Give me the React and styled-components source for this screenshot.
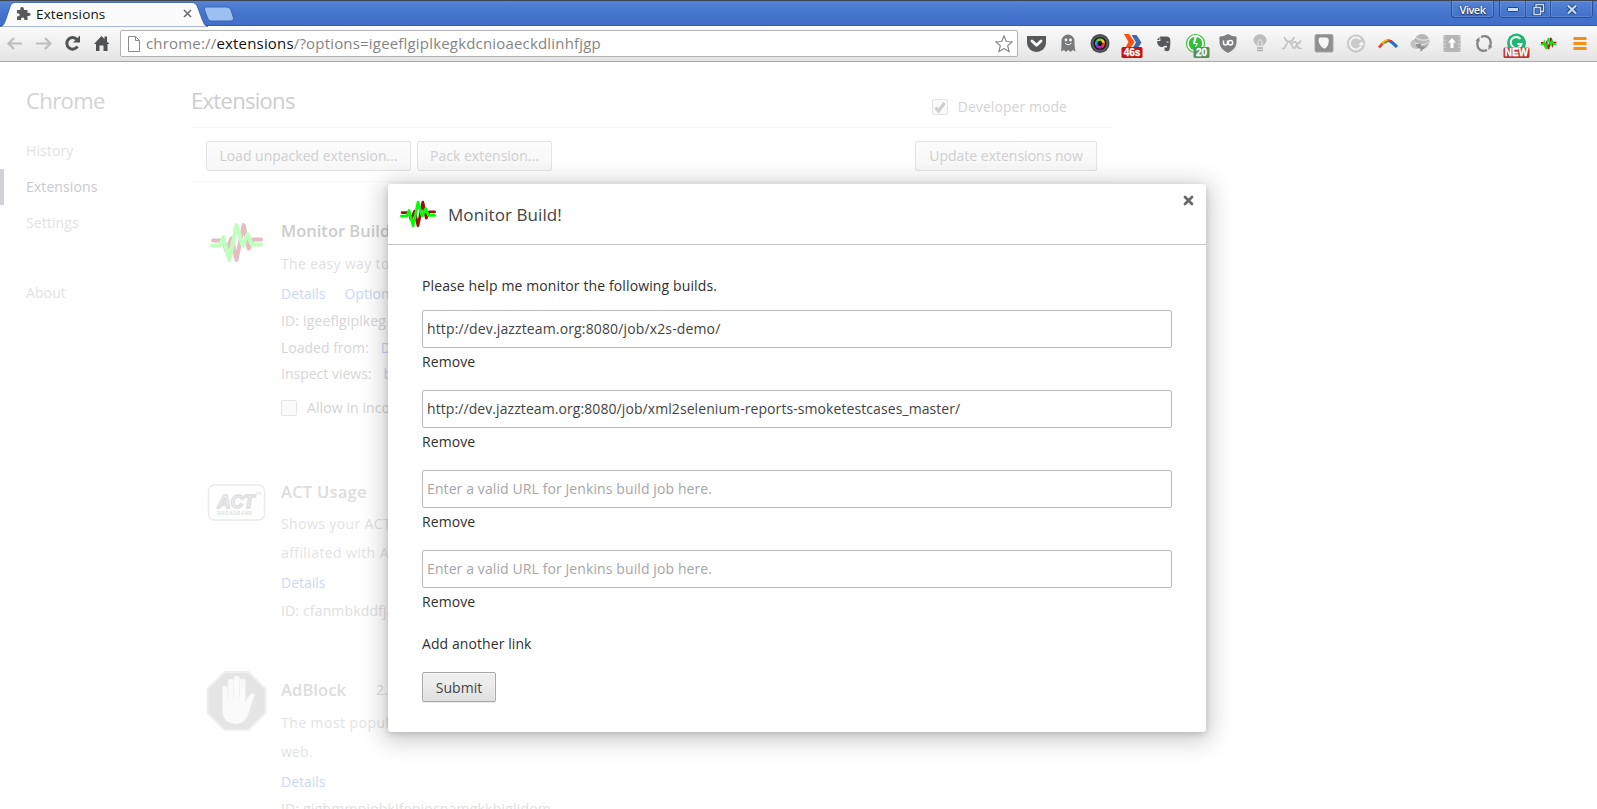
import React from "react";
import styled, { createGlobalStyle } from "styled-components";

const GlobalStyle = createGlobalStyle`
  * { box-sizing: border-box; }
  html, body { margin: 0; padding: 0; }
  body {
    width: 1597px;
    height: 809px;
    overflow: hidden;
    background: #fff;
    font-family: "Open Sans", "Noto Sans", sans-serif;
    font-size: 14px;
    line-height: 20px;
  }
`;

const Window = styled.div`
  position: relative;
  width: 1597px;
  height: 809px;
  overflow: hidden;
  display: flex;
  flex-direction: column;
`;

/* ---------- Browser frame ---------- */

const TitleBar = styled.header`
  height: 26px;
  display: flex;
  flex: none;
  align-items: flex-start;
  border-top: 1px solid #3c4450;
  border-bottom: 1px solid #34599f;
  background: linear-gradient(#5384d6, #4372cb 60%, #416fc9);
`;

const Tab = styled.div`
  position: relative;
  width: 206px;
  height: 25px;
  padding: 0 14px 0 16px;
  display: flex;
  align-items: center;
`;

const TabShape = styled.svg`
  position: absolute;
  left: 0;
  top: 0;
`;

const TabTitle = styled.span`
  position: relative;
  flex: 1;
  margin-left: 5px;
  font-size: 13.5px;
  line-height: 24px;
  letter-spacing: 0.15px;
  color: #111;
`;

const TabIcon = styled.svg`
  position: relative;
  flex: none;
`;

const NewTab = styled.svg`
  flex: none;
  margin: 5px 0 0 -3px;
`;

const Spacer = styled.div`
  flex: 1;
`;

const ProfileButton = styled.div`
  width: 43px;
  height: 17px;
  margin-right: 5px;
  border: 1px solid #2c4e94;
  border-top: 0;
  border-radius: 0 0 4px 4px;
  box-shadow: inset 0 0 0 1px rgba(255, 255, 255, 0.15);
  color: #fff;
  font-size: 11px;
  font-weight: 600;
  line-height: 18px;
  letter-spacing: -0.5px;
  text-align: center;
  text-shadow: 0 0 2px #1c2d50, 0 1px 1px #1c2d50;
`;

const WindowControls = styled.div`
  display: flex;
  height: 17px;
  margin-right: 4px;
  border: 1px solid #2c4e94;
  border-top: 0;
  border-radius: 0 0 4px 4px;
`;

const WindowControl = styled.div`
  width: ${(p) => p.$width}px;
  display: flex;
  align-items: center;
  justify-content: center;
  box-shadow: inset 0 0 0 1px rgba(255, 255, 255, 0.12);
  & + & { border-left: 1px solid #2c4e94; }
`;

const Toolbar = styled.nav`
  height: 36px;
  flex: none;
  display: flex;
  align-items: center;
  border-bottom: 1px solid #a9a9a9;
  background: linear-gradient(#fbfbfb, #e4e4e4);
`;

const NavButtons = styled.svg`
  flex: none;
`;

const Omnibox = styled.div`
  width: 898px;
  height: 27px;
  padding: 0 4px 0 7px;
  display: flex;
  align-items: center;
  border: 1px solid #b1b1b1;
  border-radius: 2px;
  background: #fff;
`;

const Url = styled.span`
  flex: 1;
  margin-left: 6px;
  font-size: 15px;
  line-height: 25px;
  letter-spacing: 0.18px;
  color: #858585;
  b { font-weight: 400; color: #111; }
`;

const ExtensionStrip = styled.div`
  display: flex;
  margin-left: 2px;
`;

const ExtIcon = styled.svg.attrs({ width: 32, height: 32, viewBox: "0 0 32 32" })`
  flex: none;
  overflow: visible;
`;

/* ---------- Settings page ---------- */

const Page = styled.main`
  flex: 1;
  display: flex;
  min-height: 0;
  background: #fff;
`;

const Sidebar = styled.aside`
  width: 191px;
  flex: none;
`;

const SideTitle = styled.h1`
  margin: 20px 0 15px 26px;
  font-size: 22px;
  font-weight: 400;
  line-height: 36px;
  letter-spacing: -0.6px;
  color: #d2d3d5;
`;

const SideItem = styled.div`
  height: 36px;
  padding-left: 22px;
  margin-top: ${(p) => p.$gap || 0}px;
  border-left: 4px solid ${(p) => (p.$active ? "#d2d3d8" : "transparent")};
  line-height: 36px;
  letter-spacing: 0.1px;
  color: ${(p) => (p.$active ? "#c9cacc" : "#e2e2e3")};
`;

const Content = styled.section`
  width: 922px;
  display: flex;
  flex-direction: column;
`;

const ContentHeader = styled.div`
  height: 66px;
  flex: none;
  display: flex;
  align-items: flex-start;
  justify-content: space-between;
  border-bottom: 1px solid #f8f8f8;
`;

const PageTitle = styled.h2`
  margin: 20px 0 0;
  font-size: 22px;
  font-weight: 400;
  line-height: 36px;
  letter-spacing: -0.7px;
  color: #cccdcf;
`;

const CheckLabel = styled.div`
  display: flex;
  align-items: center;
  gap: 10px;
  margin: ${(p) => p.$margin};
  line-height: 20px;
  letter-spacing: ${(p) => p.$spacing || 0}px;
  color: #d3d3d3;
`;

const CheckBox = styled.span`
  width: 16px;
  height: 16px;
  flex: none;
  border: 1px solid #e5e5e5;
  border-radius: 2px;
  background: #fafafa;
  svg { display: block; }
`;

const ActionRow = styled.div`
  height: 54px;
  flex: none;
  display: flex;
  align-items: flex-start;
  gap: 6px;
  padding: 13px 16px 0 15px;
  border-bottom: 1px solid #f8f8f8;
`;

const PageButton = styled.div`
  width: ${(p) => p.$width}px;
  height: 30px;
  border: 1px solid #e4e4e4;
  border-radius: 2px;
  background: linear-gradient(#fcfcfc, #f7f7f7);
  line-height: 28px;
  text-align: center;
  color: #cfcfcf;
  white-space: nowrap;
`;

const Extension = styled.article`
  display: flex;
  align-items: flex-start;
  flex: none;
  height: ${(p) => p.$height}px;
`;

const ExtensionArt = styled.svg`
  flex: none;
  width: 62px;
  height: 62px;
  margin: ${(p) => p.$top}px 13px 0 15px;
`;

const ExtensionBody = styled.div`
  white-space: nowrap;
`;

const Line = styled.div`
  display: flex;
  gap: ${(p) => p.$gap || 0}px;
  height: 20px;
  margin-top: ${(p) => p.$top || 0}px;
  letter-spacing: ${(p) => p.$spacing || 0}px;
  color: ${(p) => p.$color || "#d6d6d6"};
`;

const Name = styled.span`
  font-size: 16.5px;
  font-weight: 600;
  letter-spacing: ${(p) => p.$spacing || 0}px;
  color: ${(p) => p.$color || "#cccdce"};
`;

const PaleLink = styled.span`
  color: #c9d8f5;
`;

/* ---------- Options dialog ---------- */

const Dialog = styled.div`
  position: absolute;
  left: 388px;
  top: 184px;
  width: 818px;
  height: 548px;
  border-radius: 3px;
  background: #fff;
  box-shadow: 0 4px 23px 5px rgba(0, 0, 0, 0.2), 0 2px 6px rgba(0, 0, 0, 0.15);
`;

const DialogHeader = styled.div`
  height: 61px;
  display: flex;
  align-items: center;
  padding: 0 12px 0 12px;
  border-bottom: 1px solid #c6c6c6;
`;

const DialogTitle = styled.h3`
  flex: 1;
  margin: 2px 0 0 12px;
  font-size: 17px;
  font-weight: 400;
  line-height: 24px;
  letter-spacing: 0.08px;
  color: #444;
`;

const CloseIcon = styled.svg`
  align-self: flex-start;
  margin-top: 11px;
`;

const DialogBody = styled.div`
  padding: 31px 34px 0;
  color: #303030;
`;

const Intro = styled.p`
  height: 20px;
  margin: 0 0 14px;
  letter-spacing: 0.12px;
`;

const Field = styled.div`
  height: 80px;
`;

const UrlInput = styled.div`
  height: 38px;
  padding-left: 4px;
  border: 1px solid #bababa;
  border-radius: 2px;
  line-height: 35px;
  letter-spacing: ${(p) => p.$spacing}px;
  color: ${(p) => (p.$placeholder ? "#a6a6a6" : "#444")};
`;

const TextLink = styled.div`
  height: 20px;
  margin-top: 4px;
  letter-spacing: 0.08px;
`;

const SubmitButton = styled.div`
  width: 74px;
  height: 30px;
  margin-top: 18px;
  border: 1px solid #a8a8a8;
  border-radius: 2px;
  background: linear-gradient(#ededed, #ededed 38%, #dedede);
  box-shadow: 0 1px 0 rgba(0, 0, 0, 0.08), inset 0 1px 2px rgba(255, 255, 255, 0.75);
  color: #444;
  line-height: 30px;
  letter-spacing: 0.05px;
  text-align: center;
`;

const Pulse = ({ w, h, green = "#00ff00", red = "#9c0d14" }) => (
  <svg width={w} height={h} viewBox="0 0 52 40" fill="none" strokeWidth="4" strokeLinecap="round" strokeLinejoin="round">
    <path d="M3 18H13L16 28L21 16L26 37L33 3L38 26L42 17H50" stroke={red} />
    <path d="M2 23H10L13 15L19 37L26 3L32 23L37 12L41 22H50" stroke={green} />
  </svg>
);

const Badge = ({ x, y, w, h, text, fill, size = 10 }) => (
  <g>
    <rect x={x} y={y} width={w} height={h} rx="1.5" fill={fill} />
    <text x={x + w / 2} y={y + h - 2} textAnchor="middle" fill="#fff" stroke="#fff" strokeWidth=".3"
      fontFamily="Liberation Sans, sans-serif" fontWeight="700" fontSize={size}>{text}</text>
  </g>
);

const ToolbarIcons = () => (
  <ExtensionStrip>
    <ExtIcon>
      <path d="M7 8H26V15A9.5 9 0 0 1 7 15Z" fill="#58595b" />
      <path d="M12 13L16.500 17.300L21 13" fill="none" stroke="#fff" strokeWidth="2.800" strokeLinecap="round" strokeLinejoin="round" />
    </ExtIcon>
    <ExtIcon>
      <path d="M9 23.500C9.500 20 9.500 15 9.500 13A6.500 6.500 0 0 1 22.500 13C22.500 16 22.500 20 23.500 23.500L20.500 22L18.500 24L16.200 22L14 24L12 22Z" fill="#77797c" />
      <circle cx="14" cy="12" r="1.400" fill="#fff" /><circle cx="18.500" cy="12" r="1.400" fill="#fff" />
      <path d="M13 15Q16.200 18.500 19.500 15" fill="none" stroke="#fff" />
    </ExtIcon>
    <ExtIcon>
      <circle cx="16" cy="15.500" r="9.500" fill="#45474c" />
      <circle cx="16" cy="15.500" r="7.500" fill="none" stroke="#74767b" strokeWidth=".7" />
      <circle cx="16" cy="15.500" r="6.300" fill="#111" />
      <g fill="none" strokeWidth="2.600">
        <path d="M12.500 17A3.700 3.700 0 0 1 13 13" stroke="#12a9e8" />
        <path d="M13 13A3.700 3.700 0 0 1 17 11.800" stroke="#6cd12d" />
        <path d="M17 11.800A3.700 3.700 0 0 1 19.600 15" stroke="#f5c11c" />
        <path d="M19.600 15A3.700 3.700 0 0 1 17.500 19" stroke="#ee3b34" />
        <path d="M17.500 19A3.700 3.700 0 0 1 12.500 17" stroke="#a72bd0" />
      </g>
      <path d="M14.500 13.500L18 15L16 18Z" fill="#111" />
    </ExtIcon>
    <ExtIcon>
      <path d="M15.500 7H20.500L25.500 14.500L20.500 22H15.500L20 14.500Z" fill="#4169ad" />
      <path d="M8 6H13L18.500 14L13 22H8L12.500 14Z" fill="#ff4f0e" />
      <Badge x={5.500} y={19} w={21} h={11} text="46s" fill="#c31212" />
    </ExtIcon>
    <ExtIcon>
      <path d="M12 8.500H18.500Q22 8.500 22.300 12Q22.500 20 21 22.500Q19.500 24 16.500 22.500V19.500H19V18Q16 17 15 19Q9.500 19.500 9 13H12.500Z" fill="#55575a" />
      <path d="M9 12L11.500 9V12Z" fill="#55575a" /><path d="M18.500 14H20.500" stroke="#eee" />
    </ExtIcon>
    <ExtIcon>
      <circle cx="15.500" cy="15.500" r="9" fill="#fff" stroke="#37bd3d" strokeWidth="1.200" />
      <circle cx="15.500" cy="15.500" r="6.800" fill="#37bd3d" />
      <path d="M14.500 9L12.800 16H16.200L14.800 21L18 15H15L17 9Z" fill="#fff" />
      <Badge x={13.500} y={19} w={16} h={11} text="20" fill="#578f5b" />
    </ExtIcon>
    <ExtIcon>
      <path d="M16 6Q20 8.500 24.500 8.500V15Q24 21 16 25Q8 21 7.500 15V8.500Q12 8.500 16 6Z" fill="#7e7e81" />
      <path d="M11.500 12.500V15Q11.500 17 13.500 17T15.500 15V12.500" fill="none" stroke="#fff" strokeWidth="1.500" />
      <circle cx="18.500" cy="14.800" r="2.200" fill="none" stroke="#fff" strokeWidth="1.500" />
    </ExtIcon>
    <ExtIcon>
      <path d="M12.800 18C12 16 9.500 15 9.500 12A6.500 5.800 0 0 1 22.500 12C22.500 15 20 16 19.200 18Z" fill="#bdbdbd" />
      <path d="M14 18V13.500L16 11.500L18 13.500V18" fill="none" stroke="#f2f2f2" />
      <path d="M13 20H19M13 22.500H19" stroke="#aaa" strokeWidth="1.600" />
    </ExtIcon>
    <ExtIcon>
      <g fill="none" stroke="#c2c2c2" strokeWidth="1.700" strokeLinecap="round" strokeLinejoin="round">
        <path d="M8.500 9.500Q10 13.500 13 13.500Q16.500 13.500 18 9.500M7 20.500Q8.500 20.500 10 17.500Q11.500 14 13 13.500Q15 15 16 17.500Q17 20.500 18.500 20Q20 19.500 20.500 17M16 15.500Q18 12.500 20.500 15Q22.500 17 24.500 13M21 16Q21 20.500 25 20.500" />
      </g>
    </ExtIcon>
    <ExtIcon>
      <rect x="7" y="6.500" width="18" height="17.500" rx="1.500" fill="#8f8f8f" stroke="#a8a8a8" />
      <path d="M12.500 9.500H18Q21 9.500 20.800 13Q20.500 18.500 16.500 20.800Q11 18 10.500 12.500Q10.500 9.500 12.500 9.500Z" fill="#f6f6f6" />
    </ExtIcon>
    <ExtIcon>
      <circle cx="16" cy="15.500" r="9.200" fill="#cbcbcb" />
      <path d="M20.500 11.500A6 6 0 1 0 21.500 17.500" fill="none" stroke="#f6f6f6" strokeWidth="1.700" />
      <path d="M18.500 17L21.500 13.500L24 17Z" fill="#f6f6f6" />
    </ExtIcon>
    <ExtIcon>
      <g fill="none">
        <path d="M7 19.500Q9 17.500 11 15" stroke="#db4437" strokeWidth="2.600" />
        <path d="M10.500 15.500Q13 12.500 15.500 12.500" stroke="#f4b400" strokeWidth="3" />
        <path d="M12.500 15.500Q14 13.500 16 13.500" stroke="#2e9e64" strokeWidth="1.500" />
        <path d="M15.500 12.500Q17.500 12.500 19.500 14" stroke="#db4437" strokeWidth="3" />
        <path d="M18.500 13.200Q22 15.800 25 19" stroke="#2d6ac1" strokeWidth="3.200" />
      </g>
    </ExtIcon>
    <ExtIcon>
      <ellipse cx="12.500" cy="16" rx="6" ry="5" fill="#c2c2c2" />
      <circle cx="18" cy="13.500" r="7.500" fill="#b5b5b5" />
      <path d="M12 10Q18 14 25 11M11 15Q18 19 25 14" stroke="#dedede" fill="none" strokeWidth="1.500" />
      <path d="M12 16H17V18.500H22L16.500 24V20.500Q12 20 12 16Z" fill="#929292" />
    </ExtIcon>
    <ExtIcon>
      <rect x="7.500" y="7" width="17" height="17" rx="1" fill="#b5b5b5" />
      <path d="M9 8V23M23 8V23" stroke="#dedede" strokeDasharray="1.500 2" />
      <path d="M16 10L20 14.500H17.500V20H14.500V14.500H12Z" fill="#fff" />
    </ExtIcon>
    <ExtIcon>
      <g fill="none" stroke="#858585" strokeWidth="2.300">
        <path d="M13 9Q19 6.500 22 11.500Q23.500 15 22 19" /><path d="M19 22Q13 24.500 10 19.500Q8.500 16 10 12" />
      </g>
      <path d="M24.500 18.500L20.500 22V17Z M7.500 12.500L11.500 9V14Z" fill="#858585" />
    </ExtIcon>
    <ExtIcon>
      <circle cx="16.500" cy="15" r="9.500" fill="#23b574" />
      <path d="M20.500 11A5.500 5.500 0 1 0 21.500 16H17.500" fill="none" stroke="#fff" strokeWidth="1.900" />
      <Badge x={3.500} y={19.500} w={26} h={10.500} text="NEW" fill="#b93232" />
    </ExtIcon>
    <ExtIcon>
      <svg x="8" y="8.500" width="17" height="14" viewBox="0 0 52 40" fill="none" strokeWidth="5">
        <path d="M3 18H13L16 28L21 16L26 37L33 3L38 26L42 17H50" stroke="#b3121b" />
        <path d="M2 23H10L13 15L19 37L26 3L32 23L37 12L41 22H50" stroke="#0be818" />
      </svg>
    </ExtIcon>
    <ExtIcon>
      <path d="M9.500 10.500H22.500M9.500 15.500H22.500M9.500 20.500H22.500" stroke="#f78d13" strokeWidth="3" />
    </ExtIcon>
  </ExtensionStrip>
);

const fields = [
  { value: "http://dev.jazzteam.org:8080/job/x2s-demo/", spacing: 0.14 },
  { value: "http://dev.jazzteam.org:8080/job/xml2selenium-reports-smoketestcases_master/", spacing: 0.08 },
  { placeholder: "Enter a valid URL for Jenkins build job here.", spacing: 0.1 },
  { placeholder: "Enter a valid URL for Jenkins build job here.", spacing: 0.1 },
];

export default function App() {
  return (
    <Window>
      <GlobalStyle />
      <TitleBar>
        <Tab>
          <TabShape width="208" height="26" viewBox="0 0 208 26">
            <path d="M0 26C4 25 5 21 7 15L10 6Q11 1.500 15 1.500H192Q196 1.500 197.500 6L202 18Q204 25 208 26Z" fill="#fbfbfb" stroke="#34599f" strokeWidth=".8" />
          </TabShape>
          <TabIcon width="15" height="15" viewBox="0 0 15 15">
            <path d="M1 4H4.500C3 .200 8.500 -.500 8 4H11.500V7C15.500 5.500 15.800 11 11.500 10V14H8.300C9 10.500 4.500 10.500 5 14H1V10.500C4.500 11 4.500 6.500 1 7.200Z" fill="#58595b" />
          </TabIcon>
          <TabTitle>Extensions</TabTitle>
          <TabIcon width="9" height="9" viewBox="0 0 9 9">
            <path d="M1 1L8 8M8 1L1 8" stroke="#6c6c6c" strokeWidth="1.600" />
          </TabIcon>
        </Tab>
        <NewTab width="32" height="16" viewBox="0 0 32 16">
          <path d="M3 1H24Q27 1 28 4L30.500 12Q31 15 28 15H8Q5.500 15 4.500 12L1.500 4Q.500 1 3 1Z" fill="#9bc0f1" stroke="#3c65b3" />
        </NewTab>
        <Spacer />
        <ProfileButton>Vivek</ProfileButton>
        <WindowControls>
          <WindowControl $width={25}>
            <svg width="12" height="5"><rect x=".5" y=".5" width="11" height="4" rx="1" fill="#c9dcf8" stroke="#21437f" /></svg>
          </WindowControl>
          <WindowControl $width={25}>
            <svg width="13" height="13" fill="none">
              <path d="M4 4V1.500H11.500V8.500H9M2 4.500H8.500V11.500H2Z" stroke="#21437f" strokeWidth="3" />
              <path d="M4 4V1.500H11.500V8.500H9M2 4.500H8.500V11.500H2Z" stroke="#c9dcf8" strokeWidth="1.400" />
            </svg>
          </WindowControl>
          <WindowControl $width={42}>
            <svg width="12" height="11" fill="none">
              <path d="M2 1.500L10 9.500M10 1.500L2 9.500" stroke="#21437f" strokeWidth="4" />
              <path d="M2 1.500L10 9.500M10 1.500L2 9.500" stroke="#c9dcf8" strokeWidth="2.200" />
            </svg>
          </WindowControl>
        </WindowControls>
      </TitleBar>
      <Toolbar>
        <NavButtons width="120" height="35" viewBox="0 0 120 35" fill="none">
          <g stroke="#bdbdbd" strokeWidth="2.200">
            <path d="M22 17.500H9M14 12L8.500 17.500L14 23" /><path d="M36 17.500H49M45 12L50.500 17.500L45 23" />
          </g>
          <path d="M77 13.500A5.800 5.800 0 1 0 77.500 20.500" stroke="#515254" strokeWidth="3" />
          <path d="M80 9.500V16.500H73Z" fill="#515254" />
          <path d="M94 18L101.500 10L104.500 13V10.500H107V15.500L109.500 18H107.500V25H103.500V19.500H99.500V25H96V18Z" fill="#515254" />
        </NavButtons>
        <Omnibox>
          <svg width="12" height="16" viewBox="0 0 12 16" fill="#fff" stroke="#8b8b8b">
            <path d="M.500 .500H7.500L11.500 4.500V15.500H.500ZM7.500 .500V4.500H11.500" />
          </svg>
          <Url>chrome://<b>extensions</b>/?options=igeeflgiplkegkdcnioaeckdlinhfjgp</Url>
          <svg width="18" height="18" viewBox="0 0 18 18" fill="#fff" stroke="#8b8b8b" strokeWidth="1.200" strokeLinejoin="round">
            <path d="M9 .800L11.300 6.500L17.300 6.900L12.700 10.800L14.200 16.800L9 13.500L3.800 16.800L5.300 10.800L.700 6.900L6.700 6.500Z" />
          </svg>
        </Omnibox>
        <ToolbarIcons />
      </Toolbar>
      <Page>
        <Sidebar>
          <SideTitle>Chrome</SideTitle>
          <SideItem>History</SideItem>
          <SideItem $active>Extensions</SideItem>
          <SideItem>Settings</SideItem>
          <SideItem $gap={34}>About</SideItem>
        </Sidebar>
        <Content>
          <ContentHeader>
            <PageTitle>Extensions</PageTitle>
            <CheckLabel $margin="35px 46px 0 0" $spacing={0.06}>
              <CheckBox>
                <svg width="14" height="14" viewBox="0 0 14 14"><path d="M2.500 7.500L5.500 11L11.500 3" fill="none" stroke="#cecece" strokeWidth="3.200" /></svg>
              </CheckBox>
              Developer mode
            </CheckLabel>
          </ContentHeader>
          <ActionRow>
            <PageButton $width={205}>Load unpacked extension...</PageButton>
            <PageButton $width={135}>Pack extension...</PageButton>
            <Spacer />
            <PageButton $width={182}>Update extensions now</PageButton>
          </ActionRow>
          <Extension $height={261}>
            <ExtensionArt $top={29} viewBox="-4 0 62 62">
              <svg y="11" width="53" height="41" viewBox="0 0 52 40" fill="none" strokeWidth="4" strokeLinecap="round" strokeLinejoin="round">
                <path d="M3 18H13L16 28L21 16L26 37L33 3L38 26L42 17H50" stroke="#e6bdc0" />
                <path d="M2 23H10L13 15L19 37L26 3L32 23L37 12L41 22H50" stroke="#bfffbf" />
              </svg>
            </ExtensionArt>
            <ExtensionBody>
              <Line $top={39}><Name>Monitor Build!</Name></Line>
              <Line $top={13} $spacing={0.35} $color="#dfdfdf">The easy way to</Line>
              <Line $top={10} $gap={19}><PaleLink>Details</PaleLink><PaleLink>Options</PaleLink></Line>
              <Line $top={7} $spacing={0.15}>ID: igeeflgiplkeg</Line>
              <Line $top={7} $gap={12}>Loaded from: <PaleLink>D:</PaleLink></Line>
              <Line $top={6} $gap={12}>Inspect views: <PaleLink>b</PaleLink></Line>
              <CheckLabel $margin="14px 0 0" $spacing={0.1}><CheckBox />Allow in incog</CheckLabel>
            </ExtensionBody>
          </Extension>
          <Extension $height={198}>
            <ExtensionArt $top={29} viewBox="-1.5 0 62 62">
              <rect x="1" y="13" width="56" height="35" rx="6" fill="#fff" stroke="#eaeaea" strokeWidth="1.500" />
              <text x="10" y="35.500" fontFamily="Liberation Sans, sans-serif" fontSize="18" fontWeight="700" fontStyle="italic" textLength="37" fill="#f5f5f5" stroke="#dedede" strokeWidth="1.500">ACT</text>
              <text x="10" y="42.500" fontFamily="Liberation Sans, sans-serif" fontSize="4.500" fontWeight="700" textLength="34" fill="#dedede">BROADBAND</text>
              <text x="48" y="23" fontFamily="Liberation Sans, sans-serif" fontSize="4" fill="#dedede">TM</text>
            </ExtensionArt>
            <ExtensionBody>
              <Line $top={39}><Name $color="#dcdddd" $spacing={0.25}>ACT Usage</Name></Line>
              <Line $top={12} $spacing={0.4} $color="#e3e3e3">Shows your ACT</Line>
              <Line $top={9} $spacing={0.4} $color="#e3e3e3">affiliated with ACT</Line>
              <Line $top={10}><PaleLink>Details</PaleLink></Line>
              <Line $top={8} $spacing={0.15} $color="#e0e0e0">ID: cfanmbkddfja</Line>
            </ExtensionBody>
          </Extension>
          <Extension $height={180}>
            <ExtensionArt $top={29} viewBox="0.5 0 62 62">
              <path d="M19 2H43L60 19V43L43 60H19L2 43V19Z" fill="#e5e5e5" stroke="#f0f0f0" strokeWidth="2" />
              <path d="M17 38V19Q17 15 20 16T22.500 20V28V11Q23 8 26 9T28 12V27V8Q29 5 32 6T34 9V27V11Q35 8 38 9T40 12V32L44 25Q46 22 49 24Q50 25 48 28L43 43Q40 54 31 54Q19 54 17 43Z" fill="#fafafa" stroke="#eee" strokeWidth=".5" />
            </ExtensionArt>
            <ExtensionBody>
              <Line $top={39} $gap={30} $color="#e0e0e0"><Name $color="#dcdddd" $spacing={0.1}>AdBlock</Name>2.</Line>
              <Line $top={13} $spacing={0.45} $color="#e3e3e3">The most popul</Line>
              <Line $top={9} $spacing={0.2} $color="#e3e3e3">web.</Line>
              <Line $top={10}><PaleLink>Details</PaleLink></Line>
              <Line $top={7} $spacing={0.2} $color="#e0e0e0">ID: gighmmpiobklfepjocnamgkkbiglidom</Line>
            </ExtensionBody>
          </Extension>
        </Content>
      </Page>
      <Dialog>
        <DialogHeader>
          <Pulse w={36} h={28} />
          <DialogTitle>Monitor Build!</DialogTitle>
          <CloseIcon width="11" height="11" viewBox="0 0 11 11">
            <path d="M2 2L9 9M9 2L2 9" stroke="#696969" strokeWidth="2.800" strokeLinecap="round" />
          </CloseIcon>
        </DialogHeader>
        <DialogBody>
          <Intro>Please help me monitor the following builds.</Intro>
          {fields.map((f, i) => (
            <Field key={i}>
              <UrlInput $placeholder={!f.value} $spacing={f.spacing}>{f.value || f.placeholder}</UrlInput>
              <TextLink>Remove</TextLink>
            </Field>
          ))}
          <TextLink>Add another link</TextLink>
          <SubmitButton>Submit</SubmitButton>
        </DialogBody>
      </Dialog>
    </Window>
  );
}
